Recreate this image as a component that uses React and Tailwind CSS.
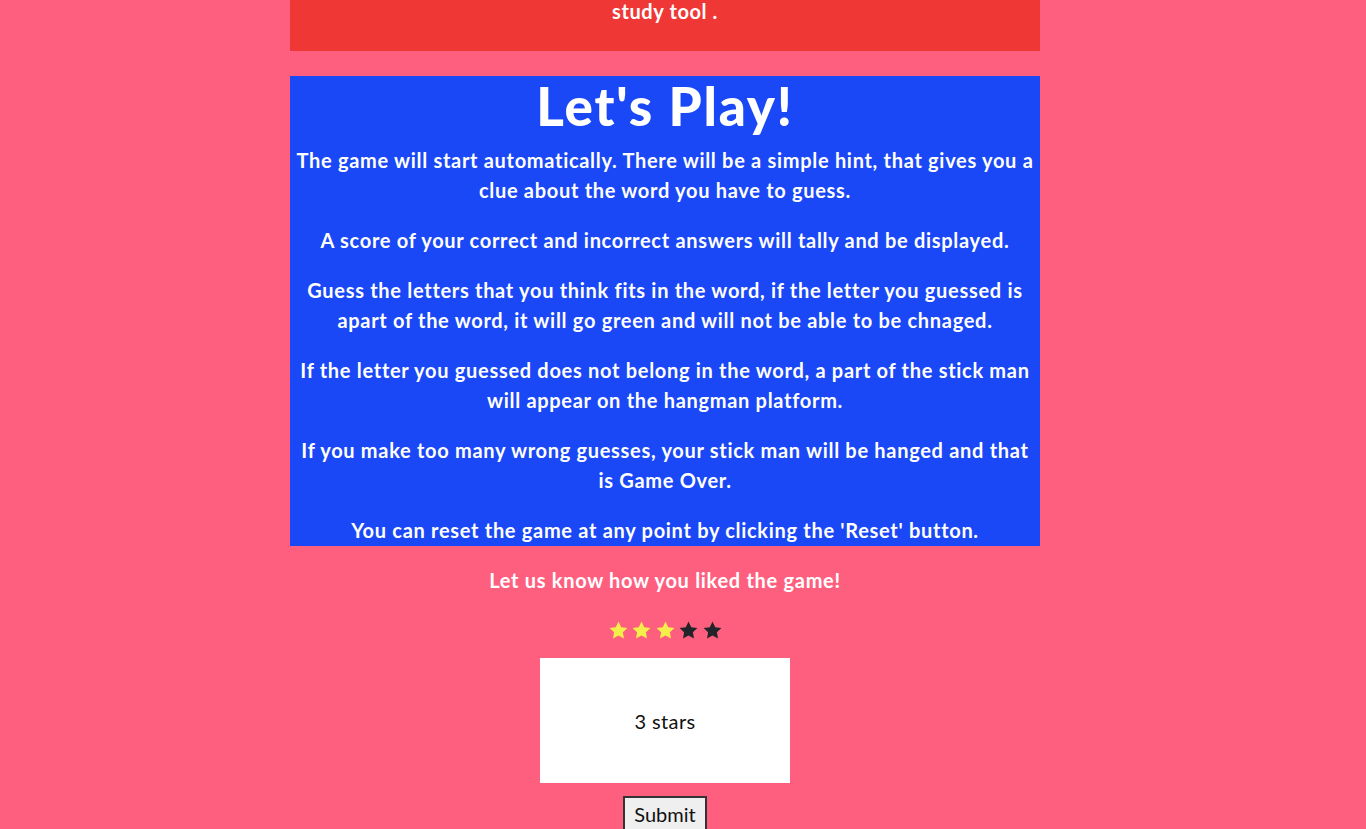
import React from 'react';

const font = { fontFamily: 'Lato, "Open Sans", sans-serif' };

function Star({ on }) {
  return (
    <svg viewBox="0 0 24 24" className="w-[21px] h-[21px]">
      <path
        d="M12 1.8l3.1 6.5 7.1.9-5.2 4.9 1.3 7-6.3-3.4-6.3 3.4 1.3-7-5.2-4.9 7.1-.9z"
        fill={on ? '#f4ee4b' : '#212529'}
      />
    </svg>
  );
}

export default function App() {
  return (
    <div className="min-h-screen bg-[#ff5f7f] text-white font-['Lato',sans-serif]" style={font}>
      <div className="w-[750px] ml-[290px] flex flex-col items-center text-center">
        {/* Header block */}
        <div className="w-full h-[51px] bg-[#ef3835]">
          <p className="text-[20px] font-bold leading-[23px] tracking-[0.6px]">study tool .</p>
        </div>

        {/* Instructions */}
        <section className="w-full mt-[25px] bg-[#1a48f6] px-[4px] pb-[1px]">
          <h1 className="text-[53px] font-black leading-[60px] mt-0 tracking-[1.8px]">Let's Play!</h1>
          <div className="mt-[9px] flex flex-col gap-[20px] text-[20px] font-bold leading-[30px] tracking-[0.7px]">
            <p>The game will start automatically. There will be a simple hint, that gives you a clue about the word you have to guess.</p>
            <p>A score of your correct and incorrect answers will tally and be displayed.</p>
            <p>Guess the letters that you think fits in the word, if the letter you guessed is apart of the word, it will go green and will not be able to be chnaged.</p>
            <p>If the letter you guessed does not belong in the word, a part of the stick man will appear on the hangman platform.</p>
            <p>If you make too many wrong guesses, your stick man will be hanged and that is Game Over.</p>
            <p>You can reset the game at any point by clicking the 'Reset' button.</p>
          </div>
        </section>

        {/* Feedback */}
        <p className="mt-[19px] text-[20px] font-bold leading-[30px] tracking-[0.7px]">Let us know how you liked the game!</p>
        <div className="mt-[25px] flex gap-[2.5px]">
          <Star on />
          <Star on />
          <Star on />
          <Star />
          <Star />
        </div>
        <div className="mt-[17px] w-[250px] h-[125px] bg-white text-[#111] text-[20px] tracking-[0.4px] flex items-center justify-center">
          3 stars
        </div>
        <button className="mt-[13px] px-[9px] h-[36px] bg-[#efefef] border-2 border-[#333] text-[#111] text-[20px]">
          Submit
        </button>
      </div>
    </div>
  );
}
